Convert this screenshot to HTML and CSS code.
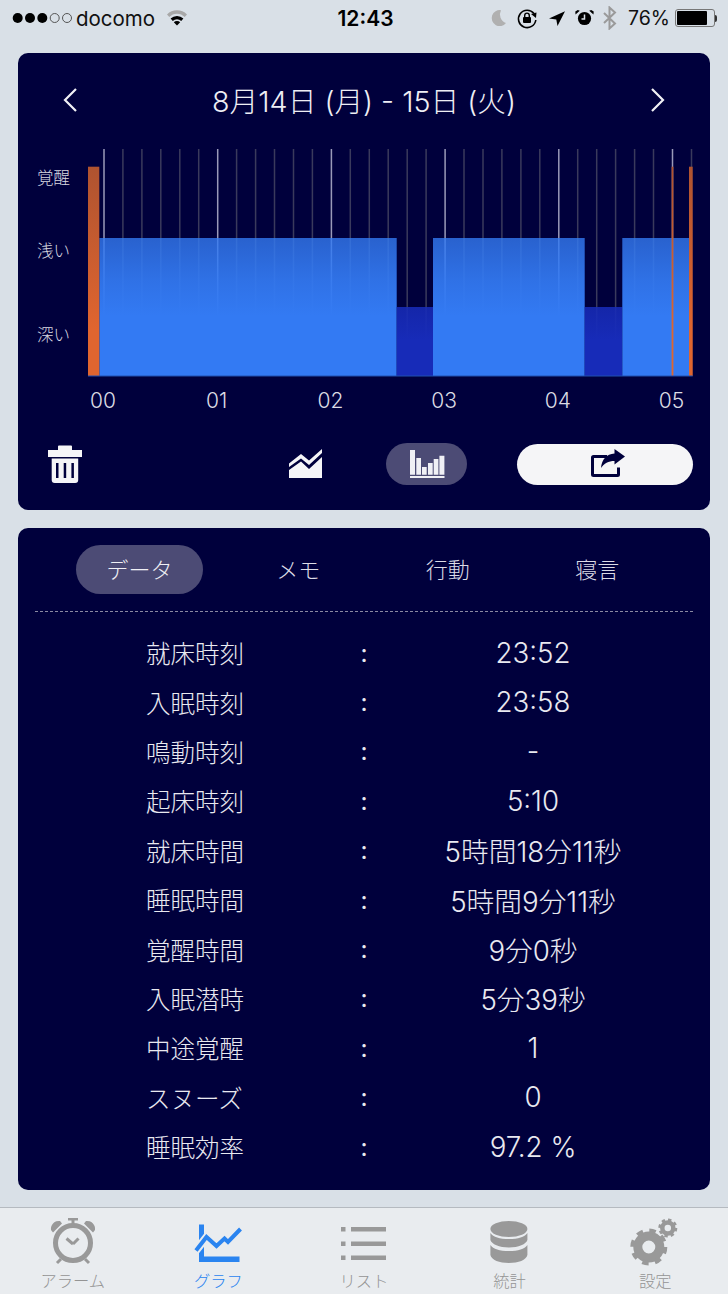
FILE: index.html
```html
<!DOCTYPE html>
<html lang="ja">
<head>
<meta charset="utf-8">
<title>グラフ</title>
<link rel="stylesheet" href="styles.css">
</head>
<body>
<div class="status">
  <div class="status-left">
    <svg class="signal" width="62" height="14" viewBox="10 11 62 14"><circle cx="16.700" cy="18" r="5" /><circle cx="29" cy="18" r="5" /><circle cx="41.300" cy="18" r="5" /><circle class="off" cx="53.700" cy="18" r="4.500" /><circle class="off" cx="66" cy="18" r="4.500" /></svg>
    <span class="carrier">docomo</span>
    <svg class="wifi" width="22" height="18" viewBox="166 9 22 18"><path class="wifi-back" d="M167 14.500a14 14 0 0 1 20 0l-2.300 2.600a10.500 10.500 0 0 0-15.400 0z"/><path d="M170.600 18.500a9.300 9.300 0 0 1 12.800 0l-2.200 2.400a6.200 6.200 0 0 0-8.400 0z"/><path d="M173.800 22.200a4.600 4.600 0 0 1 6.400 0l-3.200 3.400z"/></svg>
  </div>
  <div class="clock">12:43</div>
  <div class="status-right">
    <svg width="154" height="24" viewBox="488 6 154 24" class="sys-icons">
      <path class="grey" d="M501 10.200a8 8 0 1 0 5 12.800 9 9 0 0 1-5-12.800z"/>
      <path class="line" d="M534 13.500a8.700 8.700 0 1 0 1.800 6.500"/>
      <path d="M531 14l5.500-1.500-.5 5.500z"/>
      <rect x="523" y="17" width="8" height="6" rx="1"/>
      <path class="line thin" d="M524.700 17v-1.600a2.300 2.300 0 0 1 4.600 0V17"/>
      <path d="M565 11.300l-16 7.200 7.300 1 1.200 6.500z"/>
      <circle cx="584.500" cy="18.500" r="6.600"/>
      <path class="hand" d="M584.500 14.500v4.500h-3"/>
      <path d="M575.500 14.500l4.300-3.800-2-.7-2.500 1.600zM593.500 14.500l-4.300-3.800 2-.7 2.500 1.600z"/>
      <path class="line grey-line" d="M604 13l11 10.500-5.500 5V7.500l5.500 5-11 10.500"/>
    </svg>
    <span class="battery-text">76%</span>
    <span class="battery"><span class="battery-fill" style="width:84%"></span></span>
    <span class="battery-tip"></span>
  </div>
</div>

<section class="card chart-card">
  <header class="date-row">
    <svg class="chev" width="16" height="26" viewBox="0 0 16 26"><path d="M14 2L3 13l11 11"/></svg>
    <h1 class="date">8月14日 (月) - 15日 (火)</h1>
    <svg class="chev" width="16" height="26" viewBox="0 0 16 26"><path d="M2 2l11 11L2 24"/></svg>
  </header>
  <svg class="chart" width="692" height="280" viewBox="18 140 692 280">
    <defs>
      <linearGradient id="lt" x1="0" y1="238" x2="0" y2="316" gradientUnits="userSpaceOnUse"><stop offset="0" stop-color="#337af3" stop-opacity=".8"/><stop offset=".55" stop-color="#337af3" stop-opacity=".93"/><stop offset="1" stop-color="#337af3"/></linearGradient>
      <linearGradient id="dk" x1="0" y1="307" x2="0" y2="340" gradientUnits="userSpaceOnUse"><stop offset="0" stop-color="#172bb8" stop-opacity=".88"/><stop offset="1" stop-color="#172bb8"/></linearGradient>
      <linearGradient id="or" x1="0" y1="167" x2="0" y2="330" gradientUnits="userSpaceOnUse"><stop offset="0" stop-color="#af5330"/><stop offset="1" stop-color="#e0652f"/></linearGradient>
    </defs>
    <g class="grid" id="grid"><line x1="104" x2="104" y1="149" y2="376" class="major"/><line x1="122.9" x2="122.9" y1="149" y2="376"/><line x1="141.9" x2="141.9" y1="149" y2="376"/><line x1="160.8" x2="160.8" y1="149" y2="376"/><line x1="179.8" x2="179.8" y1="149" y2="376"/><line x1="198.7" x2="198.7" y1="149" y2="376"/><line x1="217.7" x2="217.7" y1="149" y2="376" class="major"/><line x1="236.6" x2="236.6" y1="149" y2="376"/><line x1="255.6" x2="255.6" y1="149" y2="376"/><line x1="274.5" x2="274.5" y1="149" y2="376"/><line x1="293.5" x2="293.5" y1="149" y2="376"/><line x1="312.4" x2="312.4" y1="149" y2="376"/><line x1="331.4" x2="331.4" y1="149" y2="376" class="major"/><line x1="350.3" x2="350.3" y1="149" y2="376"/><line x1="369.3" x2="369.3" y1="149" y2="376"/><line x1="388.2" x2="388.2" y1="149" y2="376"/><line x1="407.2" x2="407.2" y1="149" y2="376"/><line x1="426.1" x2="426.1" y1="149" y2="376"/><line x1="445.1" x2="445.1" y1="149" y2="376" class="major"/><line x1="464" x2="464" y1="149" y2="376"/><line x1="483" x2="483" y1="149" y2="376"/><line x1="501.9" x2="501.9" y1="149" y2="376"/><line x1="520.9" x2="520.9" y1="149" y2="376"/><line x1="539.8" x2="539.8" y1="149" y2="376"/><line x1="558.8" x2="558.8" y1="149" y2="376" class="major"/><line x1="577.7" x2="577.7" y1="149" y2="376"/><line x1="596.7" x2="596.7" y1="149" y2="376"/><line x1="615.6" x2="615.6" y1="149" y2="376"/><line x1="634.6" x2="634.6" y1="149" y2="376"/><line x1="653.5" x2="653.5" y1="149" y2="376"/><line x1="672.5" x2="672.5" y1="149" y2="376" class="major"/><line x1="691.5" x2="691.5" y1="149" y2="376"/></g>
    <rect x="99.3" y="238" width="297.4" height="138" fill="url(#lt)"/>
    <rect x="396.7" y="307" width="36.3" height="69" fill="url(#dk)"/>
    <rect x="433" y="238" width="151.7" height="138" fill="url(#lt)"/>
    <rect x="584.7" y="307" width="37.6" height="69" fill="url(#dk)"/>
    <rect x="622.3" y="238" width="66.7" height="138" fill="url(#lt)"/>
    <rect x="88" y="166.7" width="11.3" height="209.3" fill="url(#or)"/>
    <rect x="671.6" y="166.7" width="1.8" height="209.3" fill="url(#or)"/>
    <rect x="689" y="166.7" width="3.7" height="209.3" fill="url(#or)"/>
    <rect x="88" y="375.5" width="604.7" height="1" class="base"/>
    <g class="ylab">
      <text x="37" y="184">覚醒</text>
      <text x="37" y="257">浅い</text>
      <text x="37" y="341">深い</text>
    </g>
    <g class="xlab">
      <text x="103" y="408">00</text>
      <text x="216.7" y="408">01</text>
      <text x="330.4" y="408">02</text>
      <text x="444.1" y="408">03</text>
      <text x="557.8" y="408">04</text>
      <text x="671.5" y="408">05</text>
    </g>
  </svg>
  <div class="tools">
    <svg class="tool-trash" width="34" height="40" viewBox="48 444 34 40"><path d="M58 446.500a1 1 0 0 1 1-1h12a1 1 0 0 1 1 1v3.500h10v7H48v-7h10z"/><path fill-rule="evenodd" d="M51.700 458.500h26.500v21.500a3 3 0 0 1-3 3H54.700a3 3 0 0 1-3-3zM56 463v15h2.500v-15zM63.700 463v15h2.500v-15zM71.400 463v15h2.500v-15z"/></svg>
    <svg class="tool-area" width="34" height="30" viewBox="289 449 34 30"><path d="M289 478v-8l12-8.500 8 7.500 13-12v21z"/><path d="M289 463.500l12-9.500 8 6.500 13-11.500v4l-13 12-8-6.500-12 8.500z"/></svg>
    <button class="pill-btn" type="button">
      <svg width="36" height="30" viewBox="408 450 36 30"><path d="M409 451h5v24.700h-5zM415.300 459h4.700v16.700h-4.700zM421 468h4.700v7.700H421zM427 464h4.700v11.700H427zM432.700 460h4.700v15.700h-4.700zM438.400 456.700h5v19h-5zM409 477h34.500v2H409z"/></svg>
    </button>
    <button class="share-btn" type="button">
      <svg width="40" height="32" viewBox="585 449 40 32"><path class="share-box" d="M607 457.500h-13.500a1 1 0 0 0-1 1v17a1 1 0 0 0 1 1h24a1 1 0 0 0 1-1v-7"/><path d="M625 457.500l-10.500-7.500v4.500c-8 .5-12.800 6-13.500 14.500 3-4.500 7.500-7 13.500-7v3.500z"/></svg>
    </button>
  </div>
</section>

<section class="card data-card">
  <nav class="tabs">
    <a class="tab active">データ</a>
    <a class="tab">メモ</a>
    <a class="tab">行動</a>
    <a class="tab">寝言</a>
  </nav>
  <div class="dash"></div>
  <div class="rows">
    <div class="row"><span>就床時刻</span><span class="colon">:</span><span class="val">23:52</span></div>
    <div class="row"><span>入眠時刻</span><span class="colon">:</span><span class="val">23:58</span></div>
    <div class="row"><span>鳴動時刻</span><span class="colon">:</span><span class="val">-</span></div>
    <div class="row"><span>起床時刻</span><span class="colon">:</span><span class="val">5:10</span></div>
    <div class="row"><span>就床時間</span><span class="colon">:</span><span class="val">5時間18分11秒</span></div>
    <div class="row"><span>睡眠時間</span><span class="colon">:</span><span class="val">5時間9分11秒</span></div>
    <div class="row"><span>覚醒時間</span><span class="colon">:</span><span class="val">9分0秒</span></div>
    <div class="row"><span>入眠潜時</span><span class="colon">:</span><span class="val">5分39秒</span></div>
    <div class="row"><span>中途覚醒</span><span class="colon">:</span><span class="val">1</span></div>
    <div class="row"><span>スヌーズ</span><span class="colon">:</span><span class="val">0</span></div>
    <div class="row"><span>睡眠効率</span><span class="colon">:</span><span class="val">97.2 %</span></div>
  </div>
</section>

<footer class="tabbar">
  <div class="bar-item">
    <svg width="60" height="56" viewBox="43 1213 60 56">
      <circle class="g-stroke" cx="73" cy="1243" r="17.500"/>
      <path d="M68 1218h10v2.500h-3.500v4h-3v-4H68z"/>
      <path d="M51 1230a8 8 0 0 1 9-9l2 2.500-9 9zM95 1230a8 8 0 0 0-9-9l-2 2.500 9 9z"/>
      <path class="g-stroke thin" d="M57 1263l4-4M89 1263l-4-4M73 1244l-6.500-5.500M73 1244l5.500-5.500"/>
    </svg>
    <span>アラーム</span>
  </div>
  <div class="bar-item current">
    <svg width="60" height="56" viewBox="188.500 1213 60 56">
      <path d="M199.500 1224.500h5v32h35.500v5.500h-40.500z"/>
      <path class="halo" d="M196.500 1250.500l10.500-13.500 10 9 8-7.500 3.500 3.500 12.500-13"/>
      <path class="blue-line" d="M196.500 1250.500l10.500-13.500 10 9 8-7.500 3.500 3.500 12.500-13"/>
    </svg>
    <span>グラフ</span>
  </div>
  <div class="bar-item">
    <svg width="60" height="56" viewBox="334 1213 60 56">
      <path d="M341 1227h4.500v4.500H341zM351 1227h35v4.500h-35zM341 1241.500h4.500v4.500H341zM351 1241.500h35v4.500h-35zM341 1255.500h4.500v4.500H341zM351 1255.500h35v4.500h-35z"/>
    </svg>
    <span>リスト</span>
  </div>
  <div class="bar-item">
    <svg width="60" height="56" viewBox="479.600 1213 60 56">
      <ellipse cx="508.500" cy="1229" rx="18.500" ry="8"/>
      <path d="M490 1233c3 4 9 6 18.500 6s15.500-2 18.500-6v7c-1 4-9 7.500-18.500 7.500S491 1244 490 1240z"/>
      <path d="M490 1245c3 4 9 6 18.500 6s15.500-2 18.500-6v10c-1 5-9 8-18.500 8s-17.500-3-18.500-8z"/>
    </svg>
    <span>統計</span>
  </div>
  <div class="bar-item">
    <svg width="60" height="56" viewBox="625.200 1213 60 56">
      <circle class="gear" cx="649" cy="1247" r="11"/>
      <circle class="gear-teeth" cx="649" cy="1247" r="16"/>
      <circle class="gear small" cx="668" cy="1228" r="5.500"/>
      <circle class="gear-teeth small" cx="668" cy="1228" r="8"/>
    </svg>
    <span>設定</span>
  </div>
</footer>
</body>
</html>
```
FILE: styles.css
```css
* { box-sizing: border-box; }
html, body { margin: 0; padding: 0; }
body {
  width: 728px;
  height: 1294px;
  overflow: hidden;
  background: #d9e0e7;
  font-family: Inter, "Noto Sans CJK JP", sans-serif;
  font-weight: 300;
  color: #e9e9f0;
}

/* status bar */
.status {
  height: 40px;
  padding: 0 11px 4px 11px;
  display: grid;
  grid-template-columns: 1fr auto 1fr;
  align-items: center;
  color: #000;
  font-family: Inter, "Liberation Sans", sans-serif;
}
.status-left { display: flex; align-items: center; }
.signal { fill: #000; margin-left: 0; flex: none; }
.signal .off { fill: none; stroke: #555; stroke-width: 1; }
.carrier { font-size: 20.5px; font-weight: 400; margin-left: 3px; color: #111; }
.wifi { margin-left: 11px; fill: #000; }
.wifi-back { fill: #a8a8a8; }
.clock { font-size: 21px; font-weight: 600; color: #000; transform: translateX(1.500px); }
.status-right { display: flex; align-items: center; justify-content: flex-end; }
.sys-icons { fill: #000; margin-right: -14px; flex: none; }
.sys-icons .grey { fill: #b0b0b0; }
.sys-icons .line { fill: none; stroke: #000; stroke-width: 1.600; }
.sys-icons .thin { stroke-width: 1.400; }
.sys-icons .grey-line { stroke: #9a9a9a; stroke-width: 2; }
.sys-icons .hand { fill: none; stroke: #d9e0e7; stroke-width: 1.500; }
.battery-text { font-size: 19.500px; font-weight: 400; margin-right: 6px; color: #111; width: 41px; }
.battery {
  width: 40px;
  height: 18px;
  border: 1px solid #777;
  border-radius: 3px;
  padding: 1px;
  display: flex;
}
.battery-fill { background: #000; border-radius: 1px; }
.battery-tip { width: 2px; height: 7px; background: #333; border-radius: 0 2px 2px 0; }

/* cards */
.card {
  margin: 13px 18px 0;
  background: #00003c;
  border-radius: 10px;
}
.chart-card { height: 457px; }
.data-card { margin-top: 18px; height: 662px; padding: 17px 17px 0; }

.date-row {
  height: 87px;
  padding: 7px 44px 0 44px;
  display: flex;
  align-items: center;
  justify-content: space-between;
}
.chev { fill: none; stroke: #f0f0f5; stroke-width: 2.200; }
.date { margin: 0 0 1px; font-size: 28.700px; font-weight: 300; color: #eeeef4; }

.chart { display: block; }
.grid line { stroke: #3a3a5c; stroke-width: 1.500; }
.grid .major { stroke: #9a9ab8; }
.base { fill: #2050b0; }
.ylab { opacity: .99; }
.ylab text { font-size: 16.500px; fill: #dcdce2; font-family: "Noto Sans CJK JP", sans-serif; }
.xlab text { font-size: 21px; fill: #dcdce4; text-anchor: middle; font-family: Inter, sans-serif; font-weight: 300; }

.tools { display: flex; align-items: center; padding: 23px 0 0 30px; }
.tools svg { flex: none; display: block; }
.tool-trash { fill: #f5f5f7; }
.tool-area { fill: #f5f5f7; margin-left: 207px; }
.pill-btn, .share-btn { border: 0; padding: 0; display: flex; align-items: center; justify-content: center; }
.pill-btn { width: 81px; height: 42px; margin-left: 63px; border-radius: 21px; background: #4c4b75; fill: #f0f0f5; }
.share-btn { width: 176px; height: 41px; margin-left: 50px; border-radius: 21px; background: #f5f5f7; fill: #00003c; }
.share-box { fill: none; stroke: #00003c; stroke-width: 3; }

/* data */
.tabs { display: grid; grid-template-columns: 147.500px repeat(3, 149.500px); padding-left: 41px; height: 49px; }
.tab {
  display: flex;
  align-items: center;
  justify-content: center;
  font-size: 22px;
  color: #dcdce6;
  padding-bottom: 4px;
  font-family: "Noto Sans CJK JP", sans-serif;
}
.tab.active { width: 127px; background: #4c4b75; border-radius: 25px; color: #f0f0f5; }
.dash { margin-top: 17px; border-top: 1px dashed #8a8aa2; height: 0; }
.rows { margin-top: 16px; padding-left: 111px; }
.row {
  height: 49.400px;
  display: grid;
  grid-template-columns: 208px 20px 318px;
  align-items: center;
  font-size: 24.500px;
  color: #e9e9f0;
}
.colon { text-align: center; font-family: Inter, sans-serif; font-weight: 400; }
.val { text-align: center; font-size: 27.700px; }

/* tab bar */
.tabbar {
  margin-top: 17px;
  height: 87px;
  background: #e9ecef;
  border-top: 1px solid #b5bac0;
  display: grid;
  grid-template-columns: repeat(5, 1fr);
  padding-top: 5px;
}
.bar-item {
  display: flex;
  flex-direction: column;
  align-items: center;
  font-size: 16.300px;
  color: #949494;
  fill: #999;
  font-family: "Noto Sans CJK JP", sans-serif;
}
.bar-item svg { display: block; flex: none; }
.bar-item span { line-height: 22px; }
.bar-item.current { color: #2a84f0; fill: #2a84f0; }
.g-stroke { fill: none; stroke: #999; stroke-width: 5; }
.g-stroke.thin { stroke-width: 3; }
.halo { fill: none; stroke: #e9ecef; stroke-width: 8; }
.blue-line { fill: none; stroke: #2a84f0; stroke-width: 4; }
.gear { fill: none; stroke: #999; stroke-width: 9; }
.gear.small { stroke-width: 4.500; }
.gear-teeth { fill: none; stroke: #999; stroke-width: 5; stroke-dasharray: 6.300 6.270; }
.gear-teeth.small { stroke-width: 3; stroke-dasharray: 3.300 2.980; }
```
